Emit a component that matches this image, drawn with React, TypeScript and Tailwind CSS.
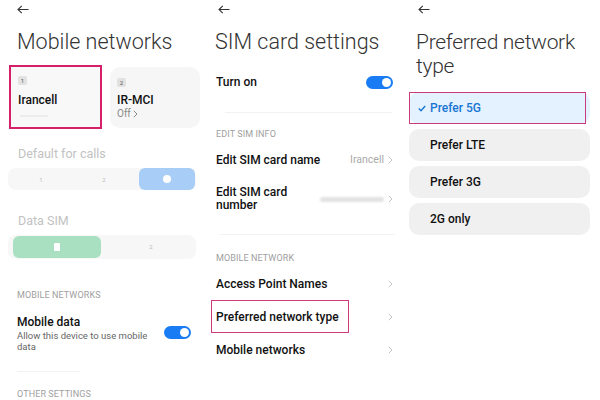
import React from 'react';

const Back: React.FC = () => (
  <svg width="12" height="9" viewBox="0 0 12 9" fill="none" stroke="#333" strokeWidth="1.1">
    <path d="M11.5 4.5H1M4.8 0.8L1 4.5l3.8 3.7" />
  </svg>
);

const Chevron: React.FC<{ color?: string }> = ({ color = '#c4c4c4' }) => (
  <svg width="5" height="8" viewBox="0 0 5 8" fill="none" stroke={color} strokeWidth="1">
    <path d="M0.8 0.8L4 4 0.8 7.2" />
  </svg>
);

const Toggle: React.FC = () => (
  <div className="w-[27px] h-[13px] rounded-full bg-[#1a7cf4] flex items-center justify-end pr-[2px]">
    <div className="w-[9px] h-[9px] rounded-full bg-white" />
  </div>
);

const SectionLabel: React.FC<{ children: React.ReactNode; className?: string }> = ({ children, className }) => (
  <div className={`text-[9px] leading-[12px] text-[#a0a0a0] tracking-[0.1px] ${className ?? ''}`}>{children}</div>
);

const MobileNetworks: React.FC = () => (
  <div className="w-[200px] flex flex-col">
    <div className="pt-[5px] pl-[17px] h-[14px]">
      <Back />
    </div>
    <h1 className="mt-[14px] pl-[17px] text-[21.5px] leading-[28px] font-light text-[#333]">Mobile networks</h1>
    <div className="mt-[9px] flex gap-[8px] pl-[9px]">
      <div className="w-[93px] h-[64px] border-2 border-[#d61f69] bg-[#f8f8f8] pt-[9px] pl-[7px]">
        <div className="w-[9px] h-[9px] rounded-[2px] bg-[#e2e2e2] text-[6px] leading-[9px] text-center text-[#555]">1</div>
        <div className="mt-[7px] text-[12px] leading-[16px] font-medium text-[#111]">Irancell</div>
        <div className="mt-[7px] ml-[2px] w-[28px] h-[2px] bg-[#ececec]" />
      </div>
      <div className="mt-[2px] w-[90px] h-[61px] rounded-[10px] bg-[#f6f6f6] pt-[11px] pl-[7px]">
        <div className="w-[9px] h-[9px] rounded-[2px] bg-[#e2e2e2] text-[6px] leading-[9px] text-center text-[#555]">2</div>
        <div className="mt-[5px] text-[12px] leading-[16px] font-medium text-[#111]">IR-MCI</div>
        <div className="flex items-center gap-[2px] text-[10px] leading-[12px] text-[#888]">
          Off <Chevron color="#888" />
        </div>
      </div>
    </div>
    <div className="mt-[17px] pl-[18px] text-[12.5px] leading-[16px] text-[#c2c2c2]">Default for calls</div>
    <div className="mt-[6px] mx-[8px] w-[188px] h-[30px] rounded-[8px] bg-[#f7f7f7] flex items-center gap-[7px] pl-[5px]">
      <div className="w-[56px] text-center text-[6px] text-[#bbb]">1</div>
      <div className="w-[56px] text-center text-[6px] text-[#bbb]">2</div>
      <div className="w-[56px] h-[22px] rounded-[6px] bg-[#a8cdf6] flex items-center justify-center">
        <div className="w-[8px] h-[8px] rounded-full bg-white" />
      </div>
    </div>
    <div className="mt-[23px] pl-[18px] text-[12.5px] leading-[16px] text-[#c2c2c2]">Data SIM</div>
    <div className="mt-[6px] mx-[8px] w-[188px] h-[31px] rounded-[8px] bg-[#f7f7f7] flex items-center gap-[6px] pl-[5px]">
      <div className="w-[88px] h-[22px] rounded-[6px] bg-[#a9e0c2] flex items-center justify-center">
        <div className="w-[6px] h-[8px] rounded-[1px] bg-white" />
      </div>
      <div className="w-[88px] text-center text-[6px] text-[#bbb]">2</div>
    </div>
    <SectionLabel className="mt-[30px] pl-[17px]">MOBILE NETWORKS</SectionLabel>
    <div className="mt-[13px] pl-[17px] pr-[9px] flex items-start justify-between">
      <div className="w-[140px]">
        <div className="text-[12px] leading-[16px] font-medium text-[#111]">Mobile data</div>
        <div className="text-[9.5px] leading-[11px] text-[#666]">Allow this device to use mobile data</div>
      </div>
      <div className="mt-[12px]">
        <Toggle />
      </div>
    </div>
    <div className="mt-[19px] ml-[17px] w-[63px] h-[2px] bg-[#f3f3f3]" />
    <SectionLabel className="mt-[16px] pl-[17px]">OTHER SETTINGS</SectionLabel>
  </div>
);

const Row: React.FC<{ label: React.ReactNode; right?: React.ReactNode; className?: string }> = ({ label, right, className }) => (
  <div className={`pl-[16px] pr-[7px] flex items-center justify-between ${className ?? ''}`}>
    {label}
    <div className="flex items-center gap-[4px]">
      {right}
      <Chevron />
    </div>
  </div>
);

const SimSettings: React.FC = () => (
  <div className="w-[200px] flex flex-col">
    <div className="pt-[5px] pl-[18px] h-[14px]">
      <Back />
    </div>
    <h1 className="mt-[14px] pl-[15px] text-[21.5px] leading-[28px] font-light text-[#333]">SIM card settings</h1>
    <div className="mt-[18px] pl-[16px] pr-[7px] flex items-center justify-between">
      <span className="text-[12px] leading-[16px] font-medium text-[#111]">Turn on</span>
      <Toggle />
    </div>
    <div className="mt-[22px] ml-[25px] mr-[8px] h-px bg-[#f2f2f2]" />
    <SectionLabel className="mt-[15px] pl-[16px]">EDIT SIM INFO</SectionLabel>
    <Row
      className="mt-[12px]"
      label={<span className="text-[12px] leading-[16px] font-medium text-[#111]">Edit SIM card name</span>}
      right={<span className="text-[10.5px] text-[#aaa]">Irancell</span>}
    />
    <Row
      className="mt-[18px]"
      label={<span className="w-[90px] text-[12px] leading-[13px] font-medium text-[#111]">Edit SIM card number</span>}
      right={<div className="w-[64px] h-[5px] rounded-full bg-[#e2e2e2] blur-[1px]" />}
    />
    <div className="mt-[22px] ml-[20px] mr-[5px] h-px bg-[#f2f2f2]" />
    <SectionLabel className="mt-[17px] pl-[16px]">MOBILE NETWORK</SectionLabel>
    <Row
      className="mt-[12px]"
      label={<span className="text-[12px] leading-[16px] font-medium text-[#111]">Access Point Names</span>}
    />
    <Row
      className="mt-[8px]"
      label={
        <span className="-ml-[5px] w-[138px] h-[33px] border border-[#cf3b7c] pl-[4px] flex items-center whitespace-nowrap text-[12px] leading-[16px] font-medium text-[#111]">
          Preferred network type
        </span>
      }
    />
    <Row
      className="mt-[9px]"
      label={<span className="text-[12px] leading-[16px] font-medium text-[#111]">Mobile networks</span>}
    />
  </div>
);

const options = ['Prefer 5G', 'Prefer LTE', 'Prefer 3G', '2G only'];

const PreferredType: React.FC = () => (
  <div className="w-[200px] flex flex-col">
    <div className="pt-[5px] pl-[18px] h-[14px]">
      <Back />
    </div>
    <h1 className="mt-[16px] pl-[16px] text-[21px] leading-[24px] font-light text-[#333] tracking-[-0.3px]">Preferred network type</h1>
    <div className="mt-[14px] pl-[9px] pr-[10px] flex flex-col gap-[5px]">
      {options.map((o, i) =>
        i === 0 ? (
          <div key={o} className="relative h-[32px] rounded-[10px] bg-[#e4f2ff] flex items-center pl-[9px] gap-[4px]">
            <div className="absolute left-0 top-0 w-[177px] h-[32px] border border-[#c93a7e]" />
            <svg width="8" height="7" viewBox="0 0 8 7" fill="none" stroke="#1976d2" strokeWidth="1.4">
              <path d="M0.8 3.6l2.2 2.2L7.2 1" />
            </svg>
            <span className="text-[12px] leading-[16px] font-medium text-[#1976d2]">{o}</span>
          </div>
        ) : (
          <div key={o} className="h-[32px] rounded-[10px] bg-[#f0f0f0] flex items-center pl-[21px]">
            <span className="text-[12px] leading-[16px] font-medium text-[#111]">{o}</span>
          </div>
        )
      )}
    </div>
  </div>
);

const App: React.FC = () => {
  return (
    <div className="w-[600px] h-[400px] overflow-hidden bg-white flex font-['Roboto',sans-serif]">
      <MobileNetworks />
      <SimSettings />
      <PreferredType />
    </div>
  );
};

export default App;
